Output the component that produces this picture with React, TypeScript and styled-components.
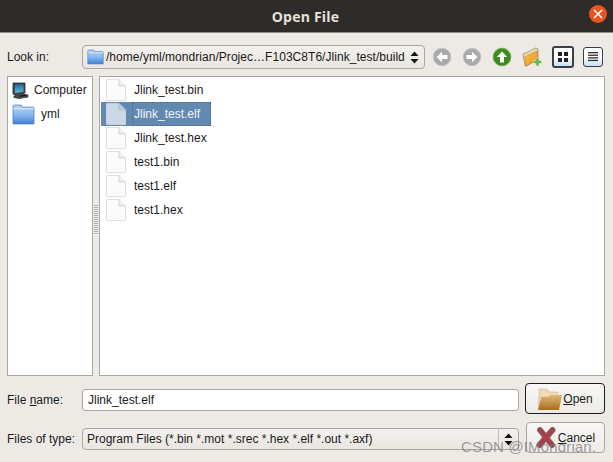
import React from "react";
import styled, { createGlobalStyle } from "styled-components";

const GlobalStyle = createGlobalStyle`
  html, body {
    margin: 0;
    padding: 0;
    background: #edeae6;
  }
  body {
    font-family: "Liberation Sans", Arial, sans-serif;
    font-size: 12px;
    color: #1a1a1a;
  }
`;

const Dialog = styled.div`
  width: 613px;
  height: 462px;
  display: flex;
  flex-direction: column;
  position: relative;
  overflow: hidden;
  background: #edeae6;
`;

const TitleBar = styled.div`
  height: 32px;
  flex: none;
  display: flex;
  align-items: center;
  justify-content: center;
  position: relative;
  padding-right: 2px;
  background: #2e2c2b;
  border-bottom: 1px solid #8f8c88;
  color: #e6e2da;
  font-family: "Open Sans", sans-serif;
  font-weight: 700;
  font-size: 14px;
  letter-spacing: 0.2px;
`;

const CloseButton = styled.div`
  position: absolute;
  right: 6px;
  top: 5px;
  width: 18px;
  height: 18px;
  border-radius: 50%;
  background: #e95420;
  display: flex;
  align-items: center;
  justify-content: center;
`;

const Content = styled.div`
  flex: 1;
  display: flex;
  flex-direction: column;
  padding: 12px 8px 0 7px;
`;

const TopRow = styled.div`
  display: flex;
  align-items: center;
  height: 24px;
`;

const FieldLabel = styled.div`
  width: 75px;
  flex: none;
  white-space: nowrap;
`;

const Combo = styled.div<{ $w: number; $h: number }>`
  width: ${(p) => p.$w}px;
  height: ${(p) => p.$h}px;
  flex: none;
  box-sizing: border-box;
  display: flex;
  align-items: center;
  border: 1px solid #a9a59f;
  border-radius: 4px;
  background: linear-gradient(#f3f1ee, #e9e6e1);
  white-space: nowrap;
  overflow: hidden;
`;

const ComboText = styled.div`
  flex: 1;
  min-width: 0;
  padding-left: 4px;
  overflow: hidden;
`;

const PathText = styled(ComboText)`
  display: flex;
  align-items: center;
  gap: 2px;
  letter-spacing: 0.04px;

  svg {
    flex: none;
  }
`;

const TypeDivider = styled.div`
  width: 1px;
  height: 20px;
  background: #c2bfba;
  flex: none;
`;

const Spinner = styled.div<{ $w: number }>`
  width: ${(p) => p.$w}px;
  flex: none;
  display: flex;
  justify-content: center;
`;

const NavButtons = styled.div`
  display: flex;
  align-items: center;
  margin-left: 7px;
  gap: 10px;
`;

const ViewButton = styled.div<{ $active?: boolean }>`
  width: ${(p) => (p.$active ? 22 : 20)}px;
  height: ${(p) => (p.$active ? 22 : 20)}px;
  box-sizing: border-box;
  border: ${(p) => (p.$active ? "2px solid #3c3f41" : "1px solid #3d3f41")};
  border-radius: 3px;
  background: linear-gradient(#fff 50%, #c7ddf2);
  display: flex;
  align-items: center;
  justify-content: center;
  margin-left: ${(p) => (p.$active ? "0" : "-1px")};
`;

const Panes = styled.div`
  display: flex;
  height: 300px;
  margin-top: 7px;
`;

const Sidebar = styled.div`
  width: 86px;
  flex: none;
  box-sizing: border-box;
  border: 1px solid #a9a59f;
  background: #fff;
  padding-top: 1px;
`;

const Splitter = styled.div`
  width: 6px;
  flex: none;
  display: flex;
  align-items: center;
  justify-content: center;
  padding-bottom: 12px;
  box-sizing: border-box;
`;

const Grip = styled.div`
  width: 4px;
  height: 30px;
  background: repeating-linear-gradient(#aaa7a1 0 1px, #f6f4f1 1px 2px);
`;

const FileList = styled.div`
  flex: 1;
  box-sizing: border-box;
  border: 1px solid #a9a59f;
  background: #fff;
  padding: 1px;
`;

const SideItem = styled.div<{ $gap: number }>`
  height: 24px;
  display: flex;
  align-items: center;
  padding-left: 4px;
  gap: ${(p) => p.$gap}px;
`;

const FileRow = styled.div<{ $selected?: boolean }>`
  width: 110px;
  height: 24px;
  display: flex;
  align-items: center;
  gap: 6px;
  padding-left: 5px;
  box-sizing: border-box;
  background: ${(p) => (p.$selected ? "#6289b0" : "transparent")};
  color: ${(p) => (p.$selected ? "#f2f5f8" : "#1a1a1a")};
`;

const FileName = styled.div<{ $focused?: boolean }>`
  flex: 1;
  align-self: stretch;
  display: flex;
  align-items: center;
  padding-left: 1px;
  border: 1px dotted ${(p) => (p.$focused ? "#46678a" : "transparent")};
`;

const FormRow = styled.div<{ $top: number }>`
  display: flex;
  height: 31px;
  margin-top: ${(p) => p.$top}px;
`;

const FormFields = styled.div`
  display: flex;
  align-items: center;
  padding-top: 3px;
`;

const Input = styled.div`
  width: 437px;
  height: 22px;
  flex: none;
  box-sizing: border-box;
  border: 1px solid #a9a59f;
  border-radius: 3px;
  background: #fff;
  padding-left: 5px;
  display: flex;
  align-items: center;
`;

const DialogButton = styled.div<{ $primary?: boolean }>`
  width: ${(p) => (p.$primary ? 80 : 79)}px;
  height: 31px;
  flex: none;
  box-sizing: border-box;
  margin-left: ${(p) => (p.$primary ? 6 : 7)}px;
  border: 1px solid ${(p) => (p.$primary ? "#1c1c1c" : "#a9a59f")};
  border-radius: 4px;
  background: linear-gradient(#f8f7f5, #eeebe7);
  display: flex;
  align-items: center;
  justify-content: center;
  gap: ${(p) => (p.$primary ? 0 : 2)}px;
`;

const Watermark = styled.div`
  position: absolute;
  left: 461px;
  top: 438px;
  font-size: 15px;
  line-height: 18px;
  letter-spacing: 0.15px;
  color: rgba(120, 120, 120, 0.72);
  white-space: nowrap;
`;

const FolderIcon = ({ w, h }: { w: number; h: number }) => (
  <svg width={w} height={h} viewBox="0 0 22 20">
    <defs>
      <linearGradient id="fld" x1="0" y1="0" x2="0" y2="1">
        <stop offset="0" stopColor="#b9d5f5" />
        <stop offset="0.5" stopColor="#8ab8ee" />
        <stop offset="1" stopColor="#3f7fd6" />
      </linearGradient>
    </defs>
    <path d="M1 2 Q1 1 2 1 H9 L10 3 H20 Q21 3 21 4 V19 H1 Z" fill="url(#fld)" stroke="#4a83c9" strokeWidth="0.8" />
    <path d="M1.5 4.5 H20.5" stroke="#e6f0fb" strokeWidth="1" />
  </svg>
);

const ComputerIcon = () => (
  <svg width="17" height="17" viewBox="0 0 17 17">
    <defs>
      <linearGradient id="scr" x1="0" y1="0" x2="0" y2="1">
        <stop offset="0" stopColor="#1d6f9c" />
        <stop offset="1" stopColor="#5cc0de" />
      </linearGradient>
    </defs>
    <path d="M1 1 H13 V11 L3 13 L1 12 Z" fill="#44484a" stroke="#25282a" strokeWidth="0.8" />
    <path d="M3 2.5 H11.5 V9.7 L3 11 Z" fill="url(#scr)" />
    <path d="M2 14 L11 12 L16 13 V15 L7 16.5 L2 15.5 Z" fill="#4a4e50" stroke="#1f2224" strokeWidth="0.7" />
    <path d="M7 14.3 L14 13.2" stroke="#0e0f10" strokeWidth="1" />
  </svg>
);

const FileIcon = ({ selected }: { selected?: boolean }) => (
  <svg width="20" height="22" viewBox="0 0 20 22">
    <path
      d="M0.5 0.5 H13 L19.5 7 V21.5 H0.5 Z"
      fill={selected ? "#cbd8e6" : "#fbfbfb"}
      stroke={selected ? "#c2d0df" : "#e0e0de"}
    />
    <path d="M13 0.5 V7 H19.5" fill={selected ? "#b9cbde" : "#f0f0ee"} stroke={selected ? "#a8bfd6" : "#d6d6d3"} />
  </svg>
);

const ArrowCircle = ({ dir, color, edge }: { dir: "left" | "right" | "up"; color: string; edge: string }) => {
  const rotate = dir === "left" ? 0 : dir === "right" ? 180 : 90;
  return (
    <svg width="20" height="20" viewBox="0 0 20 20">
      <circle cx="10" cy="10" r="8.8" fill={color} stroke={edge} strokeWidth="1" />
      <path d="M4.5 10 L10 4.8 V8 H15.5 V12 H10 V15.2 Z" fill="#fff" transform={`rotate(${rotate} 10 10)`} />
    </svg>
  );
};

const NewFolderIcon = () => (
  <svg width="20" height="20" viewBox="0 0 20 20">
    <defs>
      <linearGradient id="nf" x1="0" y1="0" x2="1" y2="1">
        <stop offset="0" stopColor="#fbc44a" />
        <stop offset="1" stopColor="#ee8f16" />
      </linearGradient>
    </defs>
    <path d="M1 7 L6 5 L13 1 L16 2 V12 L4 19 L3 19 Z" fill="#eadab0" stroke="#8d7440" strokeWidth="0.6" />
    <path d="M2.5 10 L15.5 4 V13 L4 19 Z" fill="url(#nf)" stroke="#a9772a" strokeWidth="0.5" />
    <path d="M14 11 H17 V13.5 H19.5 V16.5 H17 V19 H14 V16.5 H11.5 V13.5 H14 Z" fill="#65b455" stroke="#e9f2e4" strokeWidth="0.5" />
  </svg>
);

const IconMode = () => (
  <svg width="12" height="12" viewBox="0 0 12 12" fill="#222">
    <rect x="1" y="1" width="4" height="4" />
    <rect x="7" y="1" width="4" height="4" />
    <rect x="1" y="7" width="4" height="4" />
    <rect x="7" y="7" width="4" height="4" />
  </svg>
);

const ListMode = () => (
  <svg width="12" height="12" viewBox="0 0 12 12" fill="#333">
    <rect x="1" y="1" width="10" height="1.3" />
    <rect x="1" y="3.6" width="10" height="1.3" />
    <rect x="1" y="6.2" width="10" height="1.3" />
    <rect x="1" y="8.8" width="10" height="1.3" />
  </svg>
);

const UpDown = () => (
  <svg width="9" height="13" viewBox="0 0 9 13" fill="#111">
    <path d="M4.5 0.5 L8.5 5 H0.5 Z" />
    <path d="M0.5 8 H8.5 L4.5 12.5 Z" />
  </svg>
);

const OpenFolderIcon = () => (
  <svg width="26" height="26" viewBox="0 0 26 26">
    <defs>
      <linearGradient id="opn" x1="0" y1="0" x2="0" y2="1">
        <stop offset="0" stopColor="#e2b877" />
        <stop offset="1" stopColor="#a96d1e" />
      </linearGradient>
    </defs>
    <path d="M2 22 V3 H10 L12 6 H21 V11 H2 Z" fill="#f0dbb6" stroke="#d9c097" strokeWidth="0.7" />
    <path d="M1 24 L4 11 L11 11 L13 9 H25 L22 24 Z" fill="url(#opn)" />
  </svg>
);

const CancelIcon = () => (
  <svg width="20" height="21" viewBox="0 0 20 21">
    <path d="M4 3 L16 18 M16.5 3 L3.5 18" stroke="#7a6f6c" strokeWidth="6" strokeLinecap="round" />
    <path d="M4 3 L16 18 M16.5 3 L3.5 18" stroke="#a93f4a" strokeWidth="4.2" strokeLinecap="round" />
  </svg>
);

const files = ["Jlink_test.bin", "Jlink_test.elf", "Jlink_test.hex", "test1.bin", "test1.elf", "test1.hex"];

export default function App() {
  return (
    <Dialog>
      <GlobalStyle />
      <TitleBar>
        Open File
        <CloseButton>
          <svg width="10" height="10" viewBox="0 0 10 10">
            <path d="M1 1 L9 9 M9 1 L1 9" stroke="#fff" strokeWidth="1.5" />
          </svg>
        </CloseButton>
      </TitleBar>
      <Content>
        <TopRow>
          <FieldLabel>Look in:</FieldLabel>
          <Combo $w={343} $h={24}>
            <PathText>
              <FolderIcon w={17} h={16} />
              /home/yml/mondrian/Projec…F103C8T6/Jlink_test/build
            </PathText>
            <Spinner $w={19}>
              <UpDown />
            </Spinner>
          </Combo>
          <NavButtons>
            <ArrowCircle dir="left" color="#a9a9a9" edge="#c4c4c4" />
            <ArrowCircle dir="right" color="#a9a9a9" edge="#c4c4c4" />
            <ArrowCircle dir="up" color="#3f8a1f" edge="#6da950" />
            <NewFolderIcon />
            <ViewButton $active>
              <IconMode />
            </ViewButton>
            <ViewButton>
              <ListMode />
            </ViewButton>
          </NavButtons>
        </TopRow>
        <Panes>
          <Sidebar>
            <SideItem $gap={5}>
              <ComputerIcon />
              Computer
            </SideItem>
            <SideItem $gap={6}>
              <FolderIcon w={23} h={21} />
              yml
            </SideItem>
          </Sidebar>
          <Splitter>
            <Grip />
          </Splitter>
          <FileList>
            {files.map((name, i) => (
              <FileRow key={name} $selected={i === 1}>
                <FileIcon selected={i === 1} />
                <FileName $focused={i === 1}>{name}</FileName>
              </FileRow>
            ))}
          </FileList>
        </Panes>
        <FormRow $top={7}>
          <FormFields>
            <FieldLabel>
              File <u>n</u>ame:
            </FieldLabel>
            <Input>Jlink_test.elf</Input>
          </FormFields>
          <DialogButton $primary>
            <OpenFolderIcon />
            <span>
              <u>O</u>pen
            </span>
          </DialogButton>
        </FormRow>
        <FormRow $top={8}>
          <FormFields>
            <FieldLabel>Files of type:</FieldLabel>
            <Combo $w={437} $h={22}>
              <ComboText>Program Files (*.bin *.mot *.srec *.hex *.elf *.out *.axf)</ComboText>
              <TypeDivider />
              <Spinner $w={19}>
                <UpDown />
              </Spinner>
            </Combo>
          </FormFields>
          <DialogButton>
            <CancelIcon />
            <span>
              <u>C</u>ancel
            </span>
          </DialogButton>
        </FormRow>
      </Content>
      <Watermark>CSDN @IMondrian.</Watermark>
    </Dialog>
  );
}
